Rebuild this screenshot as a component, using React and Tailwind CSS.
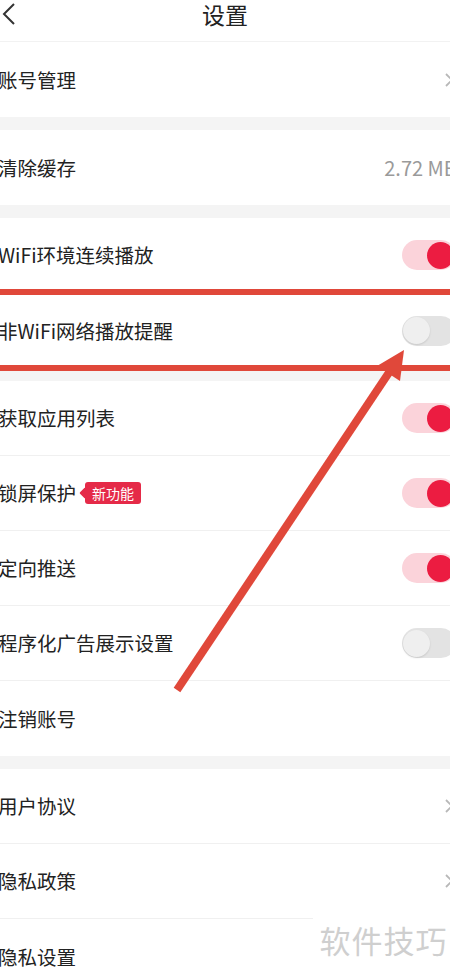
import React from "react";

const Toggle = ({ on }) => (
  <div
    className={`relative w-[54px] h-[30px] rounded-full -mr-[6px] shrink-0 ${on ? "bg-[#fbd3da]" : "bg-[#e3e3e3]"}`}
  >
    <div
      className={`absolute top-[1.5px] w-[27px] h-[27px] rounded-full ${
        on ? "right-[2px] bg-[#ec1c41]" : "left-[1px] bg-[#efefef] shadow-[0_1px_2px_rgba(0,0,0,0.12)]"
      }`}
    />
  </div>
);

const Chevron = () => (
  <svg width="12" height="14" viewBox="0 0 12 14" className="-mr-[6px] shrink-0">
    <path d="M2 1 L8 7 L2 13" fill="none" stroke="#b8b8b8" strokeWidth="1.8" />
  </svg>
);

const Row = ({ label, right, badge, last }) => (
  <div className={`h-[75px] flex items-center justify-between bg-white ${last ? "" : "border-b border-[#f0f0f0]"}`}>
    <div className="flex items-center -ml-[2px]">
      <span className="text-[19.5px] text-[#222]">{label}</span>
      {badge && (
        <div className="relative ml-[9px] flex items-center">
          <div className="absolute -left-[4px] w-[8px] h-[8px] bg-[#e52a48] rotate-45 rounded-[1px]" />
          <span className="relative bg-[#e52a48] text-white text-[14px] leading-[22px] px-[7px] rounded-[3px]">{badge}</span>
        </div>
      )}
    </div>
    {right}
  </div>
);

const Gap = () => <div className="h-[13px] bg-[#f4f4f4]" />;

export default function App() {
  return (
    <div
      className="relative w-[450px] h-[975px] overflow-hidden bg-white"
      style={{ fontFamily: '"Noto Sans CJK SC", "Noto Sans", sans-serif' }}
    >
      {/* header */}
      <div className="relative h-[42px] flex items-start justify-center pt-[3px] border-b border-[#f2f2f2]">
        <svg width="16" height="24" viewBox="0 0 16 24" className="absolute left-[1px] top-[2px]">
          <path d="M13 2 L3 12 L13 22" fill="none" stroke="#333" strokeWidth="2" />
        </svg>
        <span className="text-[23px] leading-[23px] text-[#222]">设置</span>
      </div>

      <Row label="账号管理" right={<Chevron />} last />
      <Gap />
      <Row label="清除缓存" right={<span className="text-[20px] text-[#9a9a9a] -mr-[7px] whitespace-nowrap">2.72 MB</span>} last />
      <Gap />
      <Row label="WiFi环境连续播放" right={<Toggle on />} />
      <Row label="非WiFi网络播放提醒" right={<Toggle />} last />
      <Gap />
      <Row label="获取应用列表" right={<Toggle on />} />
      <Row label="锁屏保护" badge="新功能" right={<Toggle on />} />
      <Row label="定向推送" right={<Toggle on />} />
      <Row label="程序化广告展示设置" right={<Toggle />} />
      <Row label="注销账号" last />
      <Gap />
      <Row label="用户协议" right={<Chevron />} />
      <Row label="隐私政策" right={<Chevron />} />
      <Row label="隐私设置" last />

      {/* watermark */}
      <div className="absolute left-[313px] top-[917px] right-0 bottom-0 bg-white flex items-start justify-center">
        <span className="text-[31px] text-[#cfcfcf] tracking-[1px] ml-[4px]">软件技巧</span>
      </div>

      {/* red annotation */}
      <svg className="absolute inset-0 pointer-events-none" width="450" height="975">
        <rect x="0" y="289" width="450" height="6" fill="#e0483a" />
        <rect x="0" y="365" width="450" height="6" fill="#e0483a" />
        <line x1="177" y1="690" x2="390" y2="371" stroke="#e0483a" strokeWidth="8" />
        <polygon points="404,350 400,381 377,366" fill="#e0483a" />
      </svg>
    </div>
  );
}
